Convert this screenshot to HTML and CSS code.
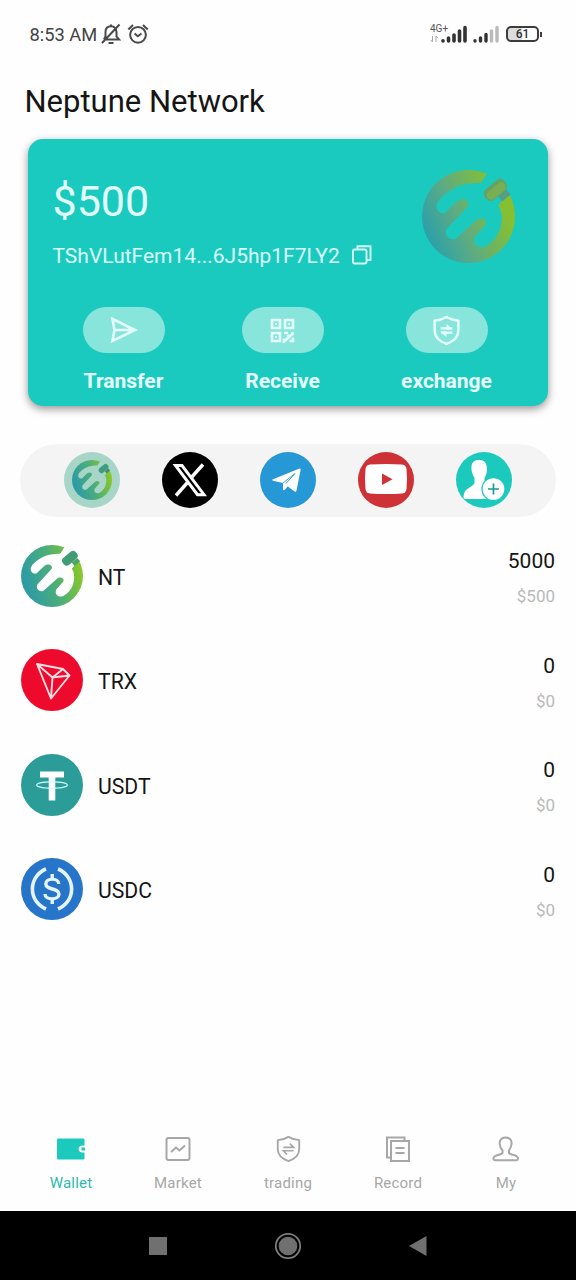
FILE: index.html
```html
<!DOCTYPE html>
<html lang="en">
<head>
<meta charset="utf-8">
<title>Neptune Network</title>
<link rel="stylesheet" href="styles.css">
</head>
<body>
<svg class="defs" width="0" height="0">
  <defs>
    <linearGradient id="nt-grad" gradientUnits="userSpaceOnUse" x1="25" y1="170" x2="262" y2="100">
      <stop offset="0" stop-color="#2f9ca3"/>
      <stop offset=".5" stop-color="#4cae79"/>
      <stop offset="1" stop-color="#86c72b"/>
    </linearGradient>
    <linearGradient id="nt-grad-card" gradientUnits="userSpaceOnUse" x1="10" y1="190" x2="240" y2="90">
      <stop offset="0" stop-color="#2ca0aa"/>
      <stop offset=".45" stop-color="#5fac80"/>
      <stop offset="1" stop-color="#86c030"/>
    </linearGradient>
    <mask id="nt-mask" maskUnits="userSpaceOnUse" x="0" y="0" width="278" height="278">
      <circle cx="139" cy="139" r="139" fill="#fff"/>
      <path d="M196 8 L176 39 C148 40 120 40 90 58 C70 70 52 84 46 98 C38 116 50 132 69 128 L102 96 C120 78 146 90 137 108 L74 176 C64 194 80 212 100 206 L160 152 C176 138 196 148 190 164 L158 200 C150 220 164 234 184 231 C215 218 232 190 237 160 C240 140 238 122 228 106 L256 72 L320 10 L230 -40Z" fill="#000"/>
    </mask>
    <symbol id="shield" viewBox="0 0 28 30">
      <path d="M14 2 C10 4.5 6.500 5.200 2.500 5.500 V15 C2.500 21 7 25.500 14 28 C21 25.500 25.500 21 25.500 15 V5.500 C21.500 5.200 18 4.500 14 2Z" fill="none" stroke="currentColor" stroke-width="2.400" stroke-linejoin="round"/>
      <path d="M8.300 13H19.500M8.700 17H19.700" fill="none" stroke="currentColor" stroke-width="2.200"/><path d="M14 8.500L20 14H14ZM14 21.500L8 16H14Z" fill="currentColor"/>
    </symbol>
    <symbol id="shield-thin" viewBox="0 0 28 30">
      <path d="M14 2 C10 4.5 6.500 5.200 2.500 5.500 V15 C2.500 21 7 25.500 14 28 C21 25.500 25.500 21 25.500 15 V5.500 C21.500 5.200 18 4.500 14 2Z" fill="none" stroke="currentColor" stroke-width="2" stroke-linejoin="round"/>
      <path d="M8.500 13.300H19.500L15.500 9.300M19.500 16.900H8.500L12.500 20.900" fill="none" stroke="currentColor" stroke-width="1.800"/>
    </symbol>
  </defs>
</svg>
<div class="screen">
  <header class="status">
    <span class="clock">8:53 AM</span>
    <svg class="bell" width="20" height="22" viewBox="0 0 20 22" fill="none" stroke="#4a4a4a" stroke-width="2"><path d="M3 16.500H18L15.500 13.500V9C15.500 5.500 13.500 3.300 10 3.300S4.500 5.500 4.500 9V13.500L3 16.500M1 20L18.500 1.500M10 1.500V3M7.500 19.900H12.500"/></svg>
    <svg class="alarm" width="22" height="22" viewBox="0 0 22 22" fill="none" stroke="#4a4a4a" stroke-width="2"><circle cx="11" cy="11.800" r="7.900"/><path d="M1.300 6.500L6 2M20.700 6.500L16 2M7.600 10.500L10.800 13.200L14.500 10.500"/></svg>
    <span class="net"><b>4G+</b><svg width="9" height="8" viewBox="0 0 9 8" fill="none" stroke="#aaa" stroke-width="1"><path d="M2.500 1V7L.7 5M6 7V1L7.800 3"/></svg></span>
    <svg class="signal" width="26" height="18" viewBox="0 0 26 18" stroke="#333" stroke-width="3.600" stroke-linecap="round"><path d="M2 15.700V16M7.500 13V16M13 10V16M18.500 6V16M24 2.500V16"/></svg>
    <svg class="signal2" width="26" height="18" viewBox="0 0 26 18" stroke="#333" stroke-width="3.400" stroke-linecap="round"><path d="M2 15.700V16M7.500 13V16M13 9.500V16"/><path stroke="#bbb" d="M18.500 6V16M24 2.500V16"/></svg>
    <span class="battery">61</span><i class="battery-tip"></i>
  </header>

  <h1 class="title">Neptune Network</h1>

  <section class="card">
    <div class="card-top">
      <div class="balance">
        <div class="amount">$500</div>
        <div class="address">TShVLutFem14...6J5hp1F7LY2
          <svg width="20" height="20" viewBox="0 0 20 20" fill="none" stroke="#d5fbf4" stroke-width="1.900"><rect x="1" y="4.500" width="13.500" height="14" rx="1.500"/><path d="M5.500 4.500V1.200H18.500V15H14.500"/></svg>
        </div>
      </div>
      <svg class="card-logo" width="93" height="93" viewBox="0 0 278 278">
        <rect width="278" height="278" fill="url(#nt-grad-card)" mask="url(#nt-mask)"/>
        <g transform="rotate(-40 220 60)"><rect x="214" y="79" width="32" height="20" fill="#539e85"/><rect x="182" y="39" width="76" height="40" rx="17" fill="#62a366"/><rect x="187" y="50" width="66" height="27" rx="13" fill="#7bae52"/></g>
      </svg>
    </div>
    <div class="actions">
      <div class="action a1"><span class="pill"><svg width="28" height="28" viewBox="0 0 28 28" fill="none" stroke="#e4fffb" stroke-width="2.600"><path d="M2.500 3L25 14L2.500 25L4.500 14Z M4.500 14H22"/></svg></span>Transfer</div>
      <div class="action a2"><span class="pill"><svg width="25" height="25" viewBox="0 0 25 25" fill="none" stroke="#e4fffb" stroke-width="2.600"><path d="M2 2H10V10H2ZM15 2H23V10H15ZM2 15H10V23H2Z"/><path d="M5 6H7M18 6H20M5 19H7" stroke-width="2"/><path d="M14 15H18M22.500 14V16L14 23.500V20.500M17.500 17L20 20M19.500 23H23V19.500"/></svg></span>Receive</div>
      <div class="action a3"><span class="pill"><svg width="29" height="31"><use href="#shield"/></svg></span>exchange</div>
    </div>
  </section>

  <nav class="social">
    <svg viewBox="0 0 56 56"><circle cx="28" cy="28" r="28" fill="#a7d5c7"/><svg x="8" y="8" width="40" height="40" viewBox="0 0 278 278"><rect width="278" height="278" fill="url(#nt-grad)" mask="url(#nt-mask)"/><g transform="rotate(-40 220 60)"><rect x="214" y="79" width="32" height="20" fill="#418f70"/><rect x="182" y="39" width="76" height="40" rx="17" fill="#3f9d7c"/></g></svg></svg>
    <svg viewBox="0 0 56 56"><circle cx="28" cy="28" r="28"/><path d="M13.500 13.500H20L42 42.700H35.500Z" fill="none" stroke="#fff" stroke-width="3"/><path d="M41 12.500L29.800 25M25.500 30.500L14 43.500" stroke="#fff" stroke-width="3.400"/></svg>
    <svg viewBox="0 0 56 56"><circle cx="28" cy="28" r="28" fill="#2598d5"/><path d="M12.500 27.500L39.500 16.500Q41 16 40.600 18L36.500 38.500Q36 40.500 34.200 39.300L27.800 34.500L24.500 38Q23 39 23 37V31L13 28.700Q11.500 28 12.500 27.500Z" fill="#fff"/><path d="M23 31L35 21.500L26 31.500" fill="none" stroke="#2598d5" stroke-width=".9"/></svg>
    <svg viewBox="0 0 56 56"><circle cx="28" cy="28" r="28" fill="#ce3236"/><path d="M12 12.500Q28 11.500 44 12.500Q48 12.800 48.500 17Q49.500 27 48.500 37Q48 41 44 41.500Q28 42.500 12 41.500Q8 41 7.500 37Q6.500 27 7.500 17Q8 12.800 12 12.500Z" fill="#fff"/><path d="M24 21.500L34.500 27.300L24 33Z" fill="#ce3236"/></svg>
    <svg viewBox="0 0 56 56"><circle cx="28" cy="28" r="28" fill="#1cc9bd"/><path d="M23 8C27 7.500 31 10 31 17C31 22 29.500 24 28.500 26V31C30 34 36 33 38 38V47H9C7.500 47 7.200 44 8 42C9 36 17 35 18.500 31V26C16 22 15 18 15.500 14C16 10 19 7.500 23 8Z" fill="#fff"/><circle cx="37.500" cy="37" r="11.500" fill="#fff" stroke="#1cc9bd" stroke-width="1.300"/><path d="M37.500 31.500V42.500M32 37H43" stroke="#159c93" stroke-width="1.700"/></svg>
  </nav>

  <main class="tokens">
    <div class="token">
      <svg viewBox="0 0 278 278"><rect width="278" height="278" fill="url(#nt-grad)" mask="url(#nt-mask)"/><g transform="rotate(-40 220 60)"><rect x="214" y="79" width="32" height="20" fill="#4ca568"/><rect x="182" y="39" width="76" height="40" rx="17" fill="#419c74"/></g></svg>
      <span class="name">NT</span><span class="value">5000<small>$500</small></span>
    </div>
    <div class="token">
      <svg viewBox="0 0 62 62"><circle cx="31" cy="31" r="31" fill="#ee0a2c"/><path d="M16 15L42 20L48.500 26.500L30 49.500ZM16 15L31.500 28.500L42 20M31.500 28.500L48.500 26.500M31.500 28.500L30 49.500" fill="none" stroke="#ffdfe2" stroke-width="1.900" stroke-linejoin="round"/></svg>
      <span class="name">TRX</span><span class="value">0<small>$0</small></span>
    </div>
    <div class="token">
      <svg viewBox="0 0 62 62"><circle cx="31" cy="31" r="31" fill="#2c9c98"/><path d="M19 17.500H43V23.500H34.300V46.500H27.700V23.500H19Z" fill="#fff"/><ellipse cx="31" cy="31" rx="15.300" ry="3.200" fill="none" stroke="#c9fff6" stroke-width="1.200"/></svg>
      <span class="name">USDT</span><span class="value">0<small>$0</small></span>
    </div>
    <div class="token">
      <svg viewBox="0 0 62 62" fill="none" stroke="#e3f5ff" stroke-width="3.600"><circle cx="31" cy="31" r="31" fill="#2775c9" stroke="none"/><path d="M25 11A21.500 21.500 0 0 0 25 51M37 11A21.500 21.500 0 0 1 37 51"/><path d="M37.800 26C37.500 19.500 24.800 19.500 24.800 26C24.800 32.500 38 29.500 38 36C38 42.500 24 42.500 24 36M31.200 16V21M31.200 41V46" stroke-width="3.400"/></svg>
      <span class="name">USDC</span><span class="value">0<small>$0</small></span>
    </div>
  </main>

  <nav class="tabs">
    <div class="tab t1 on"><svg width="28" height="28" viewBox="0 0 28 28"><path d="M1 3.500H26.500Q27.500 3.500 27.500 5V10.500H25C20.500 11 20.500 17 25 17.500H27.500V23Q27.500 24.500 26.500 24.500H1Q0 24.500 0 23V5Q0 3.500 1 3.500Z" fill="#1cc9bd"/><path d="M24.500 12.500H28V15.500H24.500Z" fill="#1cc9bd"/></svg>Wallet</div>
    <div class="tab t2"><svg width="28" height="28" viewBox="0 0 28 28" fill="none" stroke="#a7a7a7" stroke-width="2"><rect x="2.500" y="3" width="23" height="22" rx="2"/><path d="M7 17L12 12.500L15.500 15.500L21 10.500"/></svg>Market</div>
    <div class="tab t3"><svg width="27" height="28" viewBox="0 0 28 30"><use href="#shield-thin"/></svg>trading</div>
    <div class="tab t4"><svg width="28" height="28" viewBox="0 0 28 28" fill="none" stroke="#a7a7a7" stroke-width="2"><path d="M6 22.500H3V2.500H20.500V6"/><rect x="7" y="6" width="18" height="20"/><path d="M11.500 13H20.500M11.500 18H20.500"/></svg>Record</div>
    <div class="tab t5"><svg width="28" height="28" viewBox="0 0 28 28" fill="none" stroke="#a7a7a7" stroke-width="2"><path d="M13.500 2.500C18 2.500 20 5.500 19.500 9C19.300 12 18 14 17 15.500V18C18 20 25.500 19.500 26 23Q26.200 25.200 24 25.200H3.500Q1.200 25.200 1.500 23C2 19.500 9.500 20 10.500 18V15.500C9 14 8 12 7.700 9C7.300 5.500 9.500 2.500 13.500 2.500Z"/></svg>My</div>
  </nav>

  <footer class="system">
    <svg width="18" height="18"><rect width="18" height="18" fill="#707070"/></svg>
    <svg width="28" height="28" viewBox="0 0 28 28"><circle cx="14" cy="14" r="12.200" fill="none" stroke="#7d7d7d" stroke-width="1.800"/><circle cx="14" cy="14" r="9.300" fill="#707070"/></svg>
    <svg width="18" height="20"><path d="M17.500 0V20L0 10Z" fill="#707070"/></svg>
  </footer>
</div>
</body>
</html>
```
FILE: styles.css
```css
* { box-sizing: border-box; }
body { margin: 0; background: #fefefe; font-family: Roboto, "Liberation Sans", sans-serif; color: #151515; }
svg { display: block; flex: none; }
.defs { position: absolute; }
.screen { width: 576px; height: 1280px; display: flex; flex-direction: column; overflow: hidden; }

.status { height: 68px; padding-left: 29.500px; display: flex; align-items: center; flex: none; }
.clock { width: 71.500px; font-size: 18.300px; color: #444; white-space: nowrap; }
.alarm { margin-left: 6px; }
.net { margin-left: 281px; width: 10px; height: 22px; font-size: 10px; line-height: 12px; color: #555; }
.net b { font-weight: 400; display: block; }
.signal { margin-left: 1px; }
.signal2 { margin-left: 6px; }
.battery { width: 33px; height: 16px; margin-left: 7px; border: 2px solid #3c3c3c; border-radius: 5px; font-size: 12px; font-weight: 500; line-height: 13px; text-align: center; color: #333; background: linear-gradient(90deg, #ddd 50%, #fff 50%); }
.battery-tip { width: 2px; height: 5px; margin-left: 1px; background: #3c3c3c; }

.title { margin: 0; height: 71px; padding-left: 24.500px; font-size: 31px; font-weight: 400; line-height: 68px; flex: none; }

.card { width: 520px; height: 267px; margin-left: 28px; border-radius: 15px; background: #1bcabf; box-shadow: 0 3px 8px rgba(0, 0, 0, .42); flex: none; color: #dcfffb; }
.card-top { display: flex; height: 168px; padding: 31px 33px 0 24.500px; justify-content: space-between; }
.amount { font-size: 43px; line-height: 62px; color: #e2fffc; }
.address { display: flex; align-items: center; gap: 12.500px; font-size: 21px; line-height: 48px; white-space: nowrap; }
.address svg { margin-top: -2px; }
.actions { display: flex; padding-left: 15.500px; }
.action { display: flex; flex-direction: column; align-items: center; font-size: 21px; font-weight: 700; line-height: 24px; gap: 16px; color: #e6fffc; }
.a1 { width: 160px; }
.a2 { width: 158px; }
.a3 { width: 170px; }
.pill { width: 82px; height: 46px; border-radius: 23px; background: #88e5dc; display: flex; align-items: center; justify-content: center; }

.social { width: 536px; height: 73px; margin: 37.500px 0 0 20px; padding-left: 44px; border-radius: 37px; background: #f4f4f4; display: flex; align-items: center; gap: 42px; flex: none; }
.social > svg { width: 56px; height: 56px; }

.tokens { padding: 7px 21px 0; flex: 1; }
.token { height: 104.500px; display: flex; align-items: flex-start; padding-top: 21px; }
.token > svg { width: 62px; height: 62px; }
.name { margin-left: 15px; font-size: 21.200px; line-height: 65px; }
.value { margin-left: auto; display: flex; flex-direction: column; align-items: flex-end; padding-top: 1.500px; font-size: 21px; line-height: 30px; }
.value small { font-size: 17px; line-height: 40px; color: #b9b9b9; }

.tabs { height: 76.500px; padding-left: 17px; display: flex; flex: none; }
.tab { display: flex; flex-direction: column; align-items: center; gap: 10px; font-size: 15px; line-height: 21px; letter-spacing: .2px; color: #a7a7a7; }
.tab svg { height: 28px; }
.t1 { width: 108px; }
.t2 { width: 106px; }
.t3 { width: 114px; }
.t4 { width: 106px; }
.t5 { width: 110px; }
.on { color: #2cbbb0; }

.system { height: 69px; padding: 0 149.500px 0 149px; background: #000; display: flex; align-items: center; justify-content: space-between; flex: none; }
```
